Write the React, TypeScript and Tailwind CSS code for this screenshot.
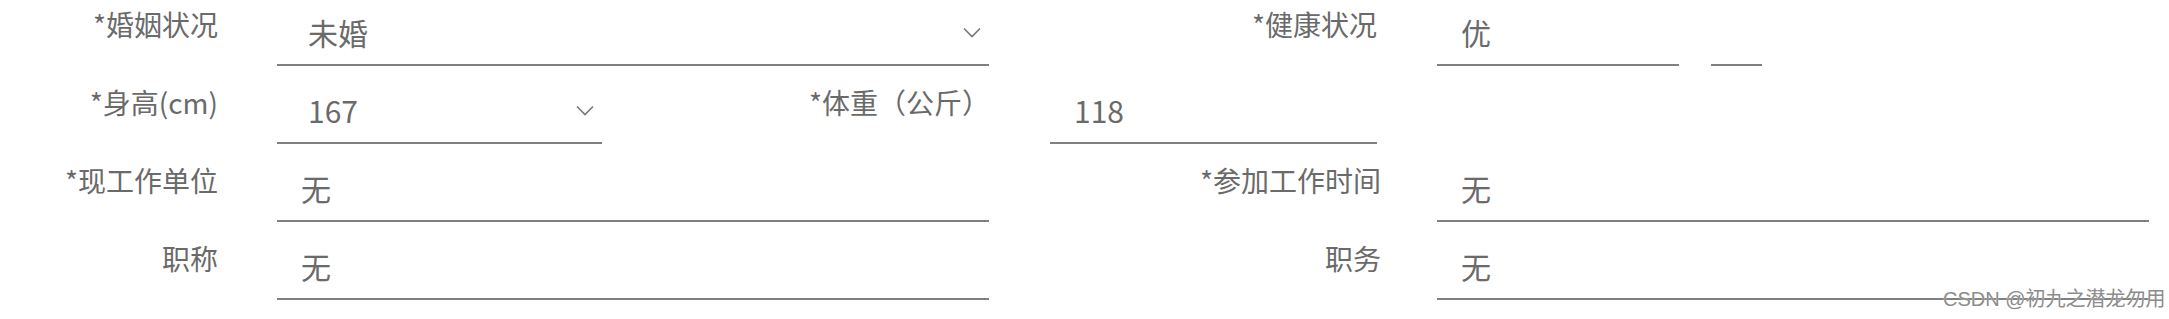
import React from 'react';

const font = "font-['Noto_Sans_CJK_SC',sans-serif]";

function Chevron() {
  return (
    <svg width="18" height="11" viewBox="0 0 18 11" className="absolute right-[8px] top-[27px]">
      <polyline points="1,1.5 9,9.5 17,1.5" fill="none" stroke="#777" strokeWidth="1.6" />
    </svg>
  );
}

function Label({ text, width }: { text: string; width: string }) {
  return (
    <div className={`${width} shrink-0 text-right text-[28px] leading-[40px] pt-[4px] text-[#6a6a6a]`}>
      {text}
    </div>
  );
}

function Field({
  value,
  width,
  offset,
  select,
}: {
  value: string;
  width: string;
  offset: string;
  select?: boolean;
}) {
  return (
    <div
      className={`relative ${width} ${offset} shrink-0 h-[66px] border-b-2 border-[#808080] text-[30px] leading-[40px] pt-[12px] text-[#6a6a6a] ${
        select ? 'pl-[31px]' : 'pl-[24px]'
      }`}
    >
      {value}
      {select && <Chevron />}
    </div>
  );
}

export default function App() {
  return (
    <div className={`relative w-[2169px] h-[319px] overflow-hidden bg-white ${font}`}>
      {/* 婚姻状况 / 健康状况 */}
      <div className="flex h-[78px]">
        <Label text="*婚姻状况" width="w-[218px]" />
        <Field value="未婚" width="w-[712px]" offset="ml-[59px]" select />
        <Label text="*健康状况" width="w-[388px]" />
        <div className="flex items-start ml-[60px]">
          <Field value="优" width="w-[242px]" offset="" />
          <div className="ml-[32px] mt-[64px] w-[51px] h-[2px] bg-[#808080]" />
        </div>
      </div>

      {/* 身高 / 体重 */}
      <div className="flex h-[78px]">
        <Label text="*身高(cm)" width="w-[218px]" />
        <Field value="167" width="w-[325px]" offset="ml-[59px]" select />
        <Label text="*体重（公斤）" width="w-[388px]" />
        <Field value="118" width="w-[327px]" offset="ml-[60px]" />
      </div>

      {/* 现工作单位 / 参加工作时间 */}
      <div className="flex h-[78px]">
        <Label text="*现工作单位" width="w-[218px]" />
        <Field value="无" width="w-[712px]" offset="ml-[59px]" />
        <Label text="*参加工作时间" width="w-[392px]" />
        <Field value="无" width="w-[712px]" offset="ml-[56px]" />
      </div>

      {/* 职称 / 职务 */}
      <div className="flex h-[78px]">
        <Label text="职称" width="w-[218px]" />
        <Field value="无" width="w-[712px]" offset="ml-[59px]" />
        <Label text="职务" width="w-[392px]" />
        <Field value="无" width="w-[712px]" offset="ml-[56px]" />
      </div>

      {/* watermark */}
      <div className="absolute left-[1943px] top-[287px] whitespace-nowrap text-[20px] leading-[24px] text-[#8c8c8c] font-['Liberation_Sans','Noto_Sans_CJK_SC',sans-serif] [text-shadow:0_0_1px_#fff]">
        CSDN @初九之潜龙勿用
      </div>
    </div>
  );
}
